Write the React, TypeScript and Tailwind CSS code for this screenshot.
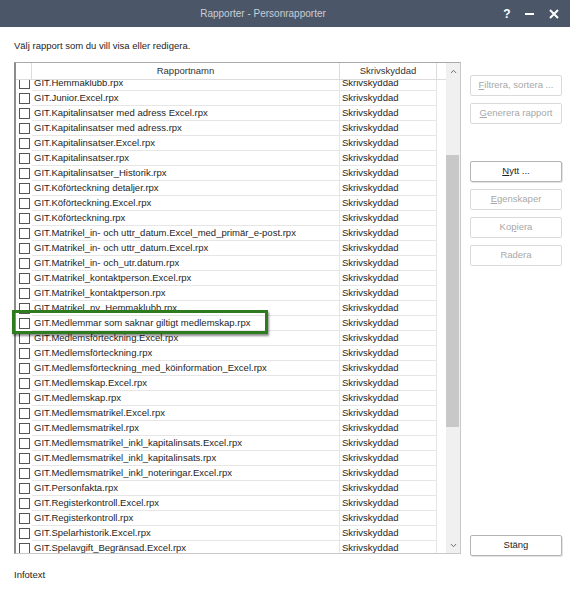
import { ChevronDown, ChevronUp } from 'lucide-react';

const reports = [
    'GIT.Hemmaklubb.rpx',
    'GIT.Junior.Excel.rpx',
    'GIT.Kapitalinsatser med adress Excel.rpx',
    'GIT.Kapitalinsatser med adress.rpx',
    'GIT.Kapitalinsatser.Excel.rpx',
    'GIT.Kapitalinsatser.rpx',
    'GIT.Kapitalinsatser_Historik.rpx',
    'GIT.Köförteckning detaljer.rpx',
    'GIT.Köförteckning.Excel.rpx',
    'GIT.Köförteckning.rpx',
    'GIT.Matrikel_in- och uttr_datum.Excel_med_primär_e-post.rpx',
    'GIT.Matrikel_in- och uttr_datum.Excel.rpx',
    'GIT.Matrikel_in- och_utr.datum.rpx',
    'GIT.Matrikel_kontaktperson.Excel.rpx',
    'GIT.Matrikel_kontaktperson.rpx',
    'GIT.Matrikel_ny_Hemmaklubb.rpx',
    'GIT.Medlemmar som saknar giltigt medlemskap.rpx',
    'GIT.Medlemsförteckning.Excel.rpx',
    'GIT.Medlemsförteckning.rpx',
    'GIT.Medlemsförteckning_med_köinformation_Excel.rpx',
    'GIT.Medlemskap.Excel.rpx',
    'GIT.Medlemskap.rpx',
    'GIT.Medlemsmatrikel.Excel.rpx',
    'GIT.Medlemsmatrikel.rpx',
    'GIT.Medlemsmatrikel_inkl_kapitalinsats.Excel.rpx',
    'GIT.Medlemsmatrikel_inkl_kapitalinsats.rpx',
    'GIT.Medlemsmatrikel_inkl_noteringar.Excel.rpx',
    'GIT.Personfakta.rpx',
    'GIT.Registerkontroll.Excel.rpx',
    'GIT.Registerkontroll.rpx',
    'GIT.Spelarhistorik.Excel.rpx',
    'GIT.Spelavgift_Begränsad.Excel.rpx',
];

function DialogButton({ label, mnemonic, disabled }: { label: string; mnemonic?: number; disabled?: boolean }) {
    const before = mnemonic === undefined ? label : label.slice(0, mnemonic);
    const key = mnemonic === undefined ? '' : label[mnemonic];
    const after = mnemonic === undefined ? '' : label.slice(mnemonic + 1);

    return (
        <button
            className={
                disabled
                    ? 'h-[21px] w-[92px] rounded-[2px] border border-[#dadada] bg-white text-[#a8a8a8]'
                    : 'h-[21px] w-[92px] rounded-[2px] border border-[#b4b4b4] bg-white text-[#1e1e1e] shadow-[1px_1px_0_#e4e4e4]'
            }
        >
            {before}
            {key && <span className="underline">{key}</span>}
            {after}
        </button>
    );
}

export default function App() {
    return (
        <div
            className="relative w-[570px] h-[595px] bg-white flex flex-col text-[9.5px] text-[#1e1e1e]"
            style={{ fontFamily: '"Liberation Sans", Arial, sans-serif' }}
        >
            {/* title bar */}
            <div className="h-[27px] bg-[#4b5768] flex items-center shrink-0">
                <div className="flex-1 flex justify-center pl-[31px] text-[10px] text-[#c9ced6]">
                    Rapporter - Personrapporter
                </div>
                <div className="flex items-center w-[75px] text-white">
                    <span className="w-[22px] ml-[1px] text-center text-[12px] font-bold">?</span>
                    <span className="w-[22px] flex justify-center">
                        <svg width="9" height="9" viewBox="0 0 9 9">
                            <rect x="0" y="4" width="9" height="2" fill="white" />
                        </svg>
                    </span>
                    <span className="w-[24px] flex justify-center ml-[2px]">
                        <svg width="10" height="10" viewBox="0 0 10 10">
                            <path d="M1 1 L9 9 M9 1 L1 9" stroke="white" strokeWidth="2" />
                        </svg>
                    </span>
                </div>
            </div>

            <div className="pl-[14px] pr-[8px] flex flex-col flex-1">
                <p className="pt-[13px] leading-[12px]">Välj rapport som du vill visa eller redigera.</p>

                <div className="mt-[10px] flex h-[494px] gap-[9px]">
                    {/* report list */}
                    <div className="w-[447px] h-[492px] shrink-0 flex border-t border-r border-b border-t-[#a9a9a9] border-r-[#c8c8c8] border-b-[#c8c8c8] border-l-2 border-l-[#8c8c8c]">
                        <div className="flex-1 flex flex-col">
                            <div className="h-[17px] flex border-b border-[#dcdcdc] text-[#333] shrink-0 relative z-10 bg-white">
                                <div className="w-[16px] border-r border-[#dcdcdc]" />
                                <div className="w-[308px] border-r border-[#dcdcdc] flex items-center justify-center">
                                    Rapportnamn
                                </div>
                                <div className="w-[97px] border-r border-[#dcdcdc] flex items-center justify-center">
                                    Skrivskyddad
                                </div>
                                <div className="flex-1" />
                            </div>
                            <div className="flex-1 overflow-hidden">
                                <div className="-mt-[4px]">
                                    {reports.map(name => (
                                        <div key={name} className="h-[15px] flex">
                                            <div className="w-[16px] flex items-center justify-center">
                                                <div className="w-[11px] h-[11px] border border-[#555] bg-white" />
                                            </div>
                                            <div className="w-[308px] border-r border-b border-[#e6e6e6] pl-[2px] leading-[14px] whitespace-nowrap overflow-hidden">
                                                {name}
                                            </div>
                                            <div className="w-[97px] border-r border-b border-[#e6e6e6] pl-[2px] leading-[14px]">
                                                Skrivskyddad
                                            </div>
                                        </div>
                                    ))}
                                </div>
                            </div>
                        </div>

                        {/* scrollbar */}
                        <div className="w-[14px] bg-[#f0f0f0] flex flex-col">
                            <div className="h-[17px] flex items-center justify-center text-[#606060]">
                                <ChevronUp size={9} strokeWidth={2.5} />
                            </div>
                            <div className="h-[75px]" />
                            <div className="h-[272px] w-[13px] bg-[#c8c8c8]" />
                            <div className="flex-1" />
                            <div className="h-[16px] flex items-center justify-center text-[#606060]">
                                <ChevronDown size={9} strokeWidth={2.5} />
                            </div>
                        </div>
                    </div>

                    {/* buttons */}
                    <div className="flex flex-col pt-[13px] shrink-0">
                        <DialogButton label="Filtrera, sortera ..." mnemonic={0} disabled />
                        <div className="mt-[7px]">
                            <DialogButton label="Generera rapport" mnemonic={0} disabled />
                        </div>
                        <div className="mt-[37px]">
                            <DialogButton label="Nytt ..." mnemonic={0} />
                        </div>
                        <div className="mt-[7px]">
                            <DialogButton label="Egenskaper" mnemonic={0} disabled />
                        </div>
                        <div className="mt-[7px]">
                            <DialogButton label="Kopiera" mnemonic={2} disabled />
                        </div>
                        <div className="mt-[7px]">
                            <DialogButton label="Radera" disabled />
                        </div>
                        <div className="mt-auto">
                            <DialogButton label="Stäng" />
                        </div>
                    </div>
                </div>

                <p className="mt-[13px] leading-[12px]">Infotext</p>
            </div>

            {/* highlighted row */}
            <div className="absolute left-[12px] top-[310px] w-[256px] h-[24px] border-[3px] border-[#2e7b20] shadow-[1px_2px_2px_rgba(0,0,0,0.45)]" />
        </div>
    );
}
